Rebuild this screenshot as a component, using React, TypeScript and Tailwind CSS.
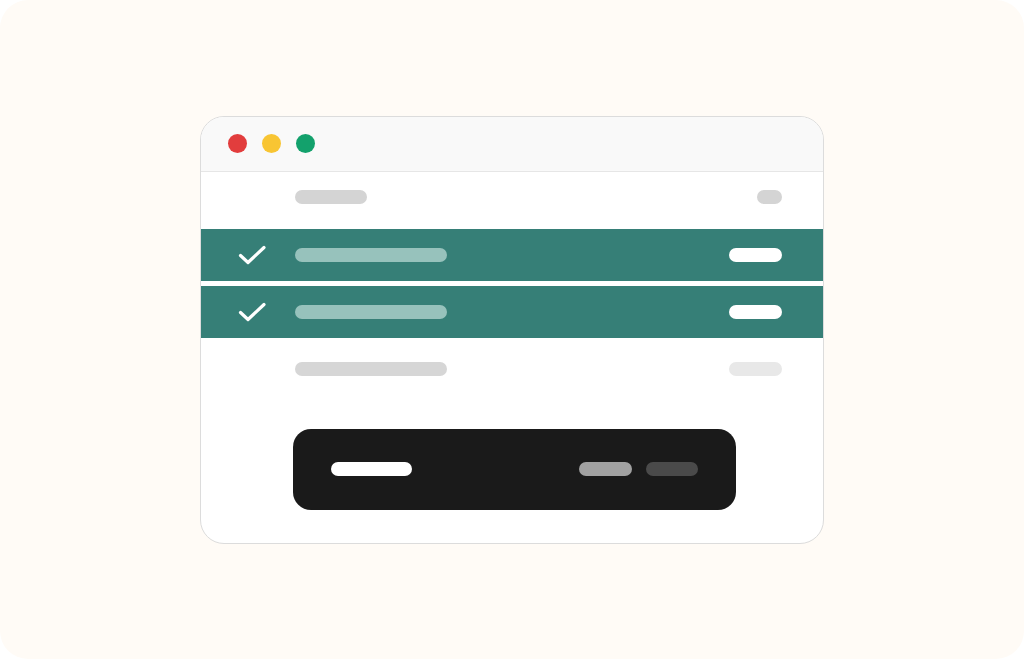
import React from "react";

function Check() {
  return (
    <svg width="28" height="20" viewBox="0 0 28 20" fill="none">
      <path d="M2.5 10.5 L10 17.5 L26 2.5" stroke="#ffffff" strokeWidth="3.2" strokeLinecap="round" strokeLinejoin="round" />
    </svg>
  );
}

export default function App() {
  return (
    <div className="w-[1024px] h-[659px] bg-white" style={{ fontFamily: "'Liberation Sans', sans-serif" }}>
      <div className="w-full h-full rounded-[28px] bg-[#fffbf6] flex items-center justify-center">
        <div className="w-[624px] h-[428px] bg-white border-[1.5px] border-[#dcdcdc] rounded-[24px] overflow-hidden flex flex-col">
          {/* Title bar */}
          <div className="h-[55px] shrink-0 bg-[#f9f9f9] border-b border-[#e6e6e6] flex items-center pl-[27px] gap-[15px]">
            <span className="w-[19px] h-[19px] rounded-full bg-[#e23d3d]" />
            <span className="w-[19px] h-[19px] rounded-full bg-[#f8c533]" />
            <span className="w-[19px] h-[19px] rounded-full bg-[#13a16c]" />
          </div>

          {/* Row 1 */}
          <div className="h-[57px] shrink-0 flex items-center pb-[6px] pl-[37px] pr-[41px]">
            <div className="w-[57px]" />
            <div className="w-[72px] h-[14px] rounded-full bg-[#d4d4d4]" />
            <div className="flex-1" />
            <div className="w-[25px] h-[14px] rounded-full bg-[#d4d4d4]" />
          </div>

          {/* Selected rows */}
          <div className="flex flex-col gap-[5px]">
            {[0, 1].map((i) => (
              <div key={i} className="h-[52px] bg-[#367f77] flex items-center pl-[37px] pr-[41px]">
                <div className="w-[57px] flex items-center">
                  <Check />
                </div>
                <div className="w-[152px] h-[14px] rounded-full bg-[#97c2bc]" />
                <div className="flex-1" />
                <div className="w-[53px] h-[14px] rounded-full bg-white" />
              </div>
            ))}
          </div>

          {/* Row 4 */}
          <div className="h-[63px] shrink-0 flex items-center pl-[37px] pr-[41px]">
            <div className="w-[57px]" />
            <div className="w-[152px] h-[14px] rounded-full bg-[#d6d6d6]" />
            <div className="flex-1" />
            <div className="w-[53px] h-[14px] rounded-full bg-[#e8e8e8]" />
          </div>

          {/* Dark panel */}
          <div className="mt-[28px] ml-[92px] w-[443px] h-[81px] rounded-[18px] bg-[#1a1a1a] flex items-center px-[38px]">
            <div className="w-[81px] h-[14px] rounded-full bg-white" />
            <div className="flex-1" />
            <div className="w-[53px] h-[14px] rounded-full bg-[#a1a1a1]" />
            <div className="w-[52px] h-[14px] rounded-full bg-[#4a4a4a] ml-[14px]" />
          </div>
        </div>
      </div>
    </div>
  );
}
